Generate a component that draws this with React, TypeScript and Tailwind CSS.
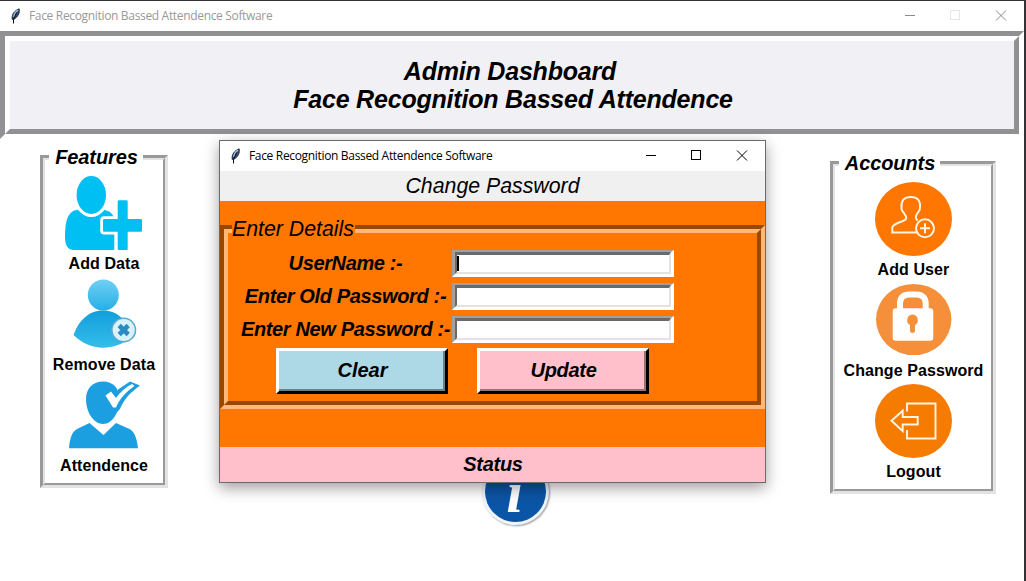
import type { ReactNode } from "react";

function Feather() {
  return (
    <svg width="16" height="16" viewBox="0 0 16 16" className="shrink-0">
      <path d="M4.2 11.5C3.400 7.500 5.600 2.800 11.200 .800c.8 3.600-.8 8-5.200 10.500z" fill="#2f4a6b" stroke="#10151d" strokeWidth=".7" />
      <path d="M5.800 9C6.200 6 7.800 3.600 10 2.200" stroke="#9dc0e6" strokeWidth="1.500" fill="none" />
      <path d="M8.600 4.500L5.500 11.500v4" stroke="#0b0f16" strokeWidth="1" fill="none" />
    </svg>
  );
}

function TitleBar({ muted }: { muted?: boolean }) {
  const ink = muted ? "#8a8a8a" : "#000";
  return (
    <div className="flex h-[30px] shrink-0 items-center bg-white font-['Open_Sans',sans-serif] text-[12px]">
      <div className="ml-2">
        <Feather />
      </div>
      <span
        className={
          muted
            ? "ml-[5px] whitespace-nowrap tracking-[-0.33px] text-[#999]"
            : "ml-[5px] whitespace-nowrap tracking-[-0.33px] text-black"
        }
      >
        Face Recognition Bassed Attendence Software
      </span>
      <svg width="138" height="30" viewBox="0 0 138 30" className="ml-auto shrink-0" fill="none" shapeRendering="crispEdges">
        <path d="M19 14.5h10" stroke={ink} />
        <rect x="64.500" y="9.500" width="9" height="9" stroke={muted ? "#e6e6e6" : "#000"} />
        <path d="M110 9.500l10 10M120 9.500l-10 10" stroke={ink} shapeRendering="auto" />
      </svg>
    </div>
  );
}

function Panel({ title, className, titleClass, children }: { title: string; className: string; titleClass: string; children: ReactNode }) {
  return (
    <section className={"relative h-[333px] border-[3px] border-t-[#999] border-r-[#e3e3e3] border-b-[#e3e3e3] border-l-[#999] " + className}>
      <div className="h-full border-2 border-t-[#e3e3e3] border-r-[#999] border-b-[#999] border-l-[#e3e3e3] pt-[15px]">
        <div className="flex flex-col items-center">{children}</div>
      </div>
      <h2 className={"absolute -top-[11px] left-[6px] flex h-[20px] items-center justify-center whitespace-nowrap bg-white pl-px text-[20px] leading-5 font-bold tracking-[-0.1px] italic " + titleClass}>
        {title}
      </h2>
    </section>
  );
}

function Item({ label, children }: { label: string; children: ReactNode }) {
  return (
    <div className="flex h-[101px] flex-col items-center">
      <svg width="77" height="75" viewBox="0 0 77 75" className="shrink-0">
        {children}
      </svg>
      <span className="pt-px pl-px text-[16px] leading-[26px] font-bold tracking-[0.08px] whitespace-nowrap">{label}</span>
    </div>
  );
}

function Field({ label, focused }: { label: string; focused?: boolean }) {
  return (
    <div className="flex h-[33px] items-center">
      <label className="w-[214px] pl-px text-center leading-[27px] tracking-[-0.36px] whitespace-nowrap">{label}</label>
      <div className="h-[27px] w-[222px] border-t-2 border-r-[3px] border-b-[3px] border-l-[3px] border-t-[#a0a0a0] border-r-white border-b-white border-l-[#a0a0a0]">
        <div className="h-full border-t-[3px] border-r-2 border-b-2 border-l-2 border-t-[#696969] border-r-[#e3e3e3] border-b-[#e3e3e3] border-l-[#696969] bg-white pt-px">
          {focused && <div className="h-[15px] w-[2px] bg-black" />}
        </div>
      </div>
    </div>
  );
}

function InfoBadge() {
  return (
    <div className="absolute top-[457px] left-[482px] h-[67px] w-[67px] rounded-full bg-[#eef5fc] p-[3px] shadow-[1px_1px_2px_rgba(0,0,0,0.4)]">
      <div className="flex h-full items-center justify-center rounded-full bg-[#0b55a6] font-['Liberation_Serif',serif] text-[60px] leading-[60px] font-bold text-white italic">
        <span className="pr-[2px]">i</span>
      </div>
    </div>
  );
}

function Dialog() {
  return (
    <div className="absolute top-[139px] left-[219px] flex h-[343px] w-[547px] flex-col border border-[#6b6b6b] bg-[#ff7700] text-[20px] shadow-[0_5px_14px_rgba(0,0,0,0.38)]">
      <TitleBar />
      <div className="flex h-[30px] items-center justify-center bg-[#f0f0f0] pt-[2px] text-[21.3px] italic">Change Password</div>
      <div className="relative mt-6 h-[184px] border-4 border-t-[#994800] border-r-[#ffb879] border-b-[#ffb879] border-l-[#994800]">
        <div className="h-full border-4 border-t-[#ffb879] border-r-[#994800] border-b-[#994800] border-l-[#ffb879] pt-[14px] pl-[10px] font-bold italic">
          <Field label="UserName :-" focused />
          <Field label="Enter Old Password :-" />
          <Field label="Enter New Password :-" />
          <div className="mt-[2px] ml-[38px] flex gap-[29px]">
            <button className="h-[46px] w-[172px] border-[3px] border-t-white border-r-black border-b-black border-l-white">
              <span className="flex h-full items-center justify-center border-r-2 border-b-2 border-[#68828a] bg-[#add8e6] pl-[3px]">Clear</span>
            </button>
            <button className="h-[46px] w-[172px] border-[3px] border-t-white border-r-black border-b-black border-l-white">
              <span className="flex h-full items-center justify-center border-r-2 border-b-2 border-[#99737a] bg-[#ffc0cb] pl-[3px] tracking-[-0.3px]">Update</span>
            </button>
          </div>
        </div>
        <h2 className="absolute -top-[12px] left-2 h-6 w-[123px] bg-[#ff7700] text-[21.3px] leading-6 whitespace-nowrap italic">Enter Details</h2>
      </div>
      <div className="mt-auto flex h-[35px] items-center justify-center bg-[#ffc0cb] pb-px pl-px font-bold tracking-[-0.3px] italic">Status</div>
    </div>
  );
}

export default function App() {
  return (
    <div className="relative h-[581px] w-[1026px] overflow-hidden border-t border-r-2 border-[#343234] bg-white font-['Liberation_Sans',Arial,sans-serif] text-black">
      <TitleBar muted />
      <header className="h-[108px] border-[5px] border-t-[#919193] border-r-white border-b-white border-l-[#919193]">
        <div className="flex h-full flex-col items-center border-[5px] border-t-white border-r-[#919193] border-b-[#919193] border-l-white bg-[#f0f0f5] pt-4 pl-[2px] text-[25px] leading-7 font-bold tracking-[-0.2px] italic">
          <span className="mr-[6px]">Admin Dashboard</span>
          <span>Face Recognition Bassed Attendence</span>
        </div>
      </header>
      <main className="flex items-start justify-between pr-7 pl-10">
        <Panel title="Features" className="mt-4 w-32 [&>div]:pr-px" titleClass="w-[94px]">
          <Item label="Add Data">
            <g transform="translate(0 1)" fill="#00c0f3">
              <path d="M0 61C0 44 3 36 11 34C20 33 34 33 40 34Q49 36 49.300 45V74H9Q0 74 0 61Z" />
              <ellipse cx="26.300" cy="19" rx="16.200" ry="20.500" stroke="#fff" strokeWidth="3" />
              <path d="M54 24.300h7.500q1.200 0 1.200 1.200V43h13q1.300 0 1.300 1.300v10.200q0 1.200-1.300 1.200h-13v17q0 1.300-1.200 1.300H54q-1.300 0-1.300-1.300v-17H39.300q-1.300 0-1.300-1.200V44.300Q38 43 39.300 43h13.400V25.500q0-1.200 1.300-1.200z" stroke="#fff" strokeWidth="5.500" />
              <path d="M54 24.300h7.500q1.200 0 1.200 1.200V43h13q1.300 0 1.300 1.300v10.200q0 1.200-1.300 1.200h-13v17q0 1.300-1.200 1.300H54q-1.300 0-1.300-1.300v-17H39.300q-1.300 0-1.300-1.200V44.300Q38 43 39.300 43h13.400V25.500q0-1.200 1.300-1.200z" />
            </g>
          </Item>
          <Item label="Remove Data">
            <defs>
              <linearGradient id="head" x1="0" y1="0" x2="0" y2="1">
                <stop stopColor="#6fd0f5" />
                <stop offset="1" stopColor="#27afe4" />
              </linearGradient>
              <linearGradient id="torso" x1="0" y1="0" x2="0" y2="1">
                <stop stopColor="#119fdb" />
                <stop offset="1" stopColor="#35bdea" />
              </linearGradient>
            </defs>
            <g transform="translate(8.500 4)">
              <circle cx="29.800" cy="15" r="15.500" fill="url(#head)" />
              <path d="M0 55C5 41 15 30.500 29.500 30.500C44 30.500 54 41 59 55C50 65 39 67.700 29.500 67.700C18 67.700 8 63 0 55Z" fill="url(#torso)" />
              <circle cx="50.200" cy="50" r="11.800" fill="#d9f1fb" stroke="#57a9cf" strokeWidth="1.500" />
              <path d="M45.700 45.500l9 9M54.700 45.500l-9 9" stroke="#2a8cc0" strokeWidth="4.600" />
            </g>
          </Item>
          <Item label="Attendence">
            <g transform="translate(4 4)" fill="#1c9fe0">
              <path d="M34 .5C44 .5 50.500 7 50.500 18C50.500 32 43 43 34 43C25 43 17 32 17 18C17 7 24 .5 34 .5Z" />
              <path d="M49 8.500L61 .500L71 4.500C61 12 55 18 51 28L46 33Z" />
              <path d="M36.500 14.500L42 10.500L47 17C51 11 57 6 63 3L65.500 5C57 11 51 17 47 26.500H44Z" fill="#fff" />
              <path d="M0 67.300C1 55 4 50 8 48L20.500 42L34.500 54L47 42L60.500 48C65 50 68 57 69 67.300Z" />
            </g>
          </Item>
        </Panel>
        <Panel title="Accounts" className="mt-[22px] w-[166px]" titleClass="w-[101px]">
          <Item label="Add User">
            <g transform="translate(0 1)" fill="none" stroke="#fff5e2" strokeWidth="2">
              <ellipse cx="38.500" cy="37" rx="38.500" ry="37" fill="#ff7700" stroke="none" />
              <path d="M41.500 50.500H17.300V45.500C18 41 28 40 30.500 37.500C32 36 31 34 29.500 32C28.500 29.500 26 29 26.500 25.500C26 18.500 29 15 35.700 15C42.500 15 45.700 18.500 45 25.500C45.500 29 43 29.500 42 32C40.500 34.500 40 36 42.500 38.500" />
              <circle cx="50" cy="46.300" r="9" />
              <path d="M45 46.300h10M50 41.300v10" />
            </g>
          </Item>
          <Item label="Change Password">
            <ellipse cx="38.700" cy="37.500" rx="37.700" ry="35.600" fill="#f58f3a" />
            <path d="M25 28V21.500C25 15 29 12.500 34 12.500H41.500C47 12.500 50.700 15.500 50.700 21.500V28" fill="none" stroke="#fff" strokeWidth="6" />
            <rect x="17.700" y="26.300" width="40.600" height="32.400" rx="3" fill="#fff" />
            <path d="M37.500 32.500a5.700 5.700 0 0 1 2.500 10.600V49q0 2-2.500 2T35 49v-5.900a5.700 5.700 0 0 1 2.500-10.600z" fill="#f58f3a" />
          </Item>
          <Item label="Logout">
            <g transform="translate(0 1)" fill="none" stroke="#fff5e2" strokeWidth="1.900">
              <ellipse cx="38.500" cy="37" rx="38.500" ry="37" fill="#f57c00" stroke="none" />
              <path d="M32 27.500V19.500H60.500V54.500H32V46" />
              <path d="M16.500 36.800L27.700 26.700V33H42.700V40.500H27.700V47Z" />
            </g>
          </Item>
        </Panel>
      </main>
      <InfoBadge />
      <Dialog />
    </div>
  );
}
